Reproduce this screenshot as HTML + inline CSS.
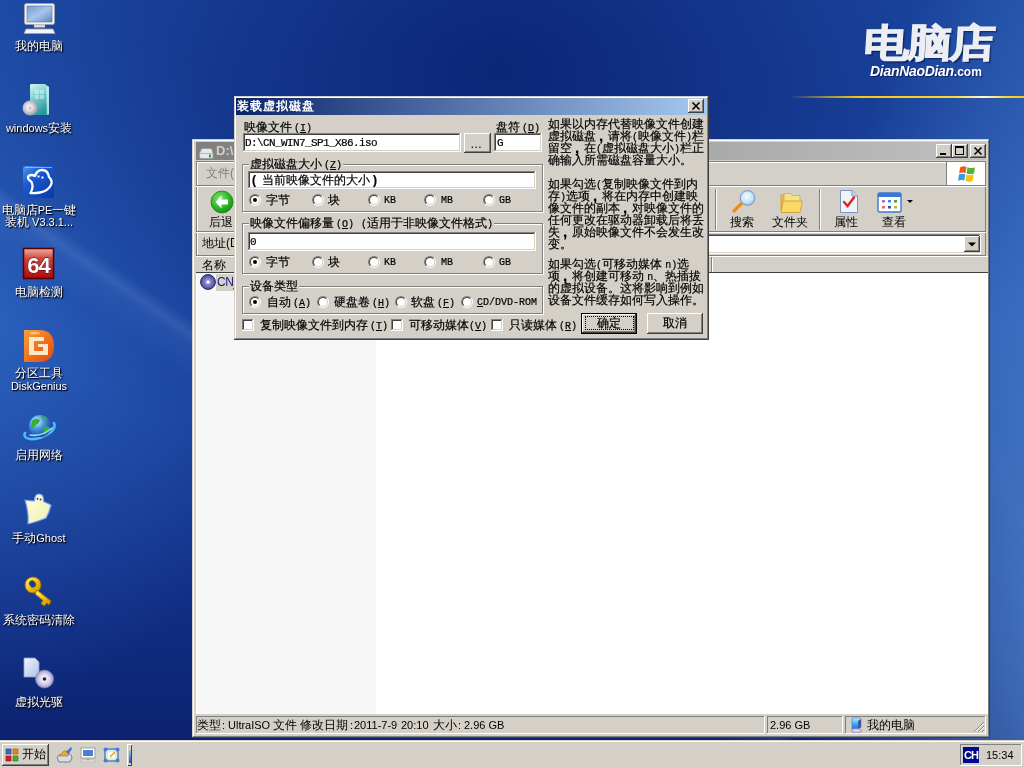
<!DOCTYPE html>
<html><head><meta charset="utf-8">
<style>
*{box-sizing:border-box}
html,body{margin:0;padding:0;width:1024px;height:768px;overflow:hidden;font-family:"Liberation Sans",sans-serif;font-size:12px;color:#000}
.a{position:absolute}
#desk{position:absolute;left:0;top:0;width:1024px;height:740px;overflow:hidden;
background:
 radial-gradient(ellipse 330px 760px at 1120px 600px, rgba(100,160,230,.8) 0%, rgba(100,160,230,0) 100%),
 linear-gradient(34.7deg, rgba(150,200,255,0) 0%, rgba(150,200,255,0) 34%, rgba(150,200,255,.07) 36.4%, rgba(170,215,255,.14) 37.1%, rgba(150,200,255,0) 38.2%, rgba(150,200,255,0) 100%),
 radial-gradient(ellipse 600px 430px at 500px 70px, rgba(8,30,110,.85) 0%, rgba(8,30,110,0) 100%),
 radial-gradient(ellipse 330px 380px at -40px 330px, rgba(55,115,210,.6) 0%, rgba(55,115,210,0) 100%),
 linear-gradient(180deg,#1f4faa 0%,#1b47a2 45%,#112f85 80%,#0c2270 100%);}
.raised{box-shadow:inset -1px -1px #404040, inset 1px 1px #d4d0c8, inset -2px -2px #808080, inset 2px 2px #fff;background:#d4d0c8}
.sunken{box-shadow:inset -1px -1px #fff, inset 1px 1px #808080, inset -2px -2px #d4d0c8, inset 2px 2px #404040;background:#fff}
.btn{box-shadow:inset -1px -1px #404040, inset 1px 1px #fff, inset -2px -2px #808080, inset 2px 2px #d4d0c8;background:#d4d0c8}
.thin-sunken{box-shadow:inset -1px -1px #fff, inset 1px 1px #808080}
.thin-raised{box-shadow:inset -1px -1px #808080, inset 1px 1px #fff}
.dlg{font-family:"Liberation Sans",sans-serif;font-size:12px;line-height:12px;white-space:nowrap}
.mono{font-family:"Liberation Mono",monospace}

.rb{position:absolute;width:12px;height:12px;border-radius:50%;border:1px solid;border-color:#808080 #fff #fff #808080}
.rb::before{content:"";position:absolute;left:0;top:0;width:10px;height:10px;border-radius:50%;border:1px solid;border-color:#404040 #d4d0c8 #d4d0c8 #404040;background:#fff;box-sizing:border-box}
.rb.on::after{content:"";position:absolute;left:3px;top:3px;width:4px;height:4px;border-radius:50%;background:#000}
.cb{position:absolute;width:12px;height:12px;background:#fff;box-shadow:inset -1px -1px #fff, inset 1px 1px #808080, inset -2px -2px #d4d0c8, inset 2px 2px #404040}
.grp{position:absolute;border:1px solid #808080;box-shadow:inset 1px 1px #fff, 1px 1px #fff}
.lbl{position:absolute;white-space:nowrap;line-height:12px;font-size:12px;-webkit-text-stroke:0.2px #000}
.glbl{position:absolute;white-space:nowrap;line-height:12px;font-size:12px;-webkit-text-stroke:0.2px #000;background:#d4d0c8;padding:0 1px}
.cm{display:inline-block;width:12px;height:12px;vertical-align:top;position:relative}
.cm::after{content:",";position:absolute;left:3px;top:0px;font-family:"Liberation Sans",sans-serif;font-weight:bold;font-size:15px;line-height:12px}
.m{font-family:"Liberation Mono",monospace;font-size:10px}
.u{text-decoration:underline}
.ico-lbl{position:absolute;color:#fff;text-shadow:1px 1px 1px #000, 1px 1px 2px rgba(0,0,0,.7);font-size:12px;line-height:12px;text-align:center;white-space:nowrap}
</style></head>
<body>
<div id="root" style="position:absolute;left:0;top:0;width:1024px;height:768px;will-change:transform">
<div id="desk"></div>

<!-- logo -->
<div class="a" style="left:790px;top:96px;width:234px;height:2px;background:linear-gradient(90deg,rgba(240,192,24,0) 0%,rgba(240,192,24,.6) 15%,#f4c818 30%,#f8d838 70%,#fff8e0 83%,#f8d838 92%,#f4c818 100%)"></div>
<div class="a" style="left:865px;top:20px;font-size:38px;line-height:46px;font-weight:700;color:#eceef2;transform:scaleX(1.2) skewX(-3deg);transform-origin:0 0;letter-spacing:-2px;-webkit-text-stroke:1.2px #eceef2;text-shadow:2px 2px 1px rgba(0,10,60,.55)">电脑店</div>
<div class="a" style="left:870px;top:63px;font-size:14px;line-height:17px;font-weight:bold;font-style:italic;color:#fff;white-space:nowrap;text-shadow:1px 1px 1px rgba(0,0,40,.6);letter-spacing:-0.3px">DianNaoDian<span style="font-weight:bold;font-style:normal;font-size:12px;letter-spacing:0">.com</span></div>

<!-- desktop icons -->
<svg class="a" style="left:23px;top:2px" width="33" height="33" viewBox="0 0 33 33">
 <defs><linearGradient id="scr" x1="0" y1="0" x2="1" y2="1"><stop offset="0" stop-color="#6f9bd0"/><stop offset=".5" stop-color="#a9c6ea"/><stop offset="1" stop-color="#5a86c0"/></linearGradient></defs>
 <rect x="1.5" y="1.5" width="30" height="21" rx="2" fill="#f2f2f2" stroke="#9aa0a8" stroke-width="1"/>
 <rect x="4" y="4" width="25" height="16" fill="url(#scr)" stroke="#5a78a0" stroke-width=".6"/>
 <rect x="11" y="22.5" width="11" height="3" fill="#d8d8d8"/>
 <path d="M3 27 H30 L32 31.5 H1 Z" fill="#f4f4f4" stroke="#a0a0a8" stroke-width=".8"/>
</svg>
<div class="ico-lbl" style="left:0;top:40px;width:78px">我的电脑</div>

<svg class="a" style="left:22px;top:83px" width="30" height="34" viewBox="0 0 30 34">
 <defs><linearGradient id="tb" x1="0" y1="0" x2="0.4" y2="1"><stop offset="0" stop-color="#d8f8f8"/><stop offset=".45" stop-color="#80d0d0"/><stop offset="1" stop-color="#2c9a9c"/></linearGradient>
 <radialGradient id="cd2" cx="45%" cy="45%" r="55%"><stop offset="0" stop-color="#fff"/><stop offset=".5" stop-color="#d8d4d8"/><stop offset="1" stop-color="#a09ca4"/></radialGradient></defs>
 <path d="M8 2 Q8 1 9.5 1 H23 L27 4 V31 Q27 32 26 32 H9.5 Q8 32 8 31 Z" fill="url(#tb)"/>
 <path d="M24 3 L27 4 V31 L25 32 Z" fill="#c8f4f4" opacity=".8"/>
 <path d="M13 7 h4 v4 h-4 z M18 7 h4 v4 h-4 z M13 12 h4 v4 h-4 z M18 12 h4 v4 h-4 z" fill="#e8ffff" opacity=".45"/>
 <circle cx="8" cy="25" r="7.5" fill="url(#cd2)"/>
 <circle cx="8" cy="25" r="1.5" fill="#c0c0c8"/>
</svg>
<div class="ico-lbl" style="left:0;top:122px;width:78px"><span style="font-size:11px">windows</span>安装</div>

<svg class="a" style="left:22px;top:165px" width="33" height="33" viewBox="0 0 33 33">
 <defs><linearGradient id="pe" x1="0" y1="0" x2="1" y2="1"><stop offset="0" stop-color="#4a9af0"/><stop offset=".35" stop-color="#1a5ad0"/><stop offset="1" stop-color="#0838a8"/></linearGradient></defs>
 <rect x="1" y="1" width="31" height="32" rx="3" fill="url(#pe)"/>
 <path d="M3 2.5 H30" stroke="#a8d0ff" stroke-width="1" opacity=".7"/>
 <path d="M8.5 28 Q12 22 9.5 17 Q4.5 13.5 6.5 11 Q9.5 9 13 11 Q15 5 20 5 Q26 5 27 12 Q31 16 29 20 Q26 26 18 27.5 Q12 28.5 8.5 28 Z" fill="none" stroke="#fff" stroke-width="2.3" stroke-linejoin="round"/>
 <rect x="15.5" y="10.5" width="2" height="2" fill="#fff"/><rect x="19.5" y="11.5" width="2" height="2" fill="#fff"/>
</svg>
<div class="ico-lbl" style="left:0;top:204px;width:78px">电脑店<span style="font-size:11px">PE</span>一键</div><div class="ico-lbl" style="left:0;top:216px;width:78px">装机<span style="font-size:11px"> V3.3.1...</span></div>

<svg class="a" style="left:22px;top:247px" width="33" height="33" viewBox="0 0 33 33">
 <defs><linearGradient id="r64" x1="0" y1="0" x2="0" y2="1"><stop offset="0" stop-color="#f0b0a8"/><stop offset=".35" stop-color="#d04038"/><stop offset="1" stop-color="#b00c08"/></linearGradient></defs>
 <rect x="1.5" y="1.5" width="30" height="30" fill="url(#r64)" stroke="#5a0000" stroke-width="1.6"/>
 <text x="16.5" y="26" text-anchor="middle" font-family="Liberation Sans" font-weight="bold" font-size="22" fill="#fff" stroke="#300" stroke-width=".8" paint-order="stroke" letter-spacing="-1">64</text>
</svg>
<div class="ico-lbl" style="left:0;top:286px;width:78px">电脑检测</div>

<svg class="a" style="left:23px;top:329px" width="32" height="34" viewBox="0 0 32 34">
 <defs><linearGradient id="dg" x1="0" y1="0" x2="1" y2="1"><stop offset="0" stop-color="#f8a040"/><stop offset=".6" stop-color="#ee6a18"/><stop offset="1" stop-color="#d84c10"/></linearGradient></defs>
 <path d="M1 1 H16 Q31 1 31 17 Q31 33 16 33 H1 Z" fill="url(#dg)"/>
 <path d="M6 8 H21 V12 H11 V22 H20 V18 H15 V15 H25 V26 H6 Z" fill="#fbe8c8"/>
 <ellipse cx="12" cy="4" rx="5" ry="1.5" fill="#ffd080" opacity=".7"/>
</svg>
<div class="ico-lbl" style="left:0;top:367px;width:78px">分区工具</div><div class="ico-lbl" style="left:0;top:380px;width:78px"><span style="font-size:11px">DiskGenius</span></div>

<svg class="a" style="left:22px;top:414px" width="34" height="28" viewBox="0 0 34 28">
 <defs><radialGradient id="gl2" cx="35%" cy="30%" r="70%"><stop offset="0" stop-color="#e8f8ff"/><stop offset=".45" stop-color="#4a9ae8"/><stop offset="1" stop-color="#1a48a0"/></radialGradient></defs>
 <path d="M3 19 Q1 24 8 25 Q18 26 29 18 Q34 13 32 9" fill="none" stroke="#46bdf4" stroke-width="2.6" stroke-linecap="round"/>
 <circle cx="18" cy="12" r="11" fill="url(#gl2)"/>
 <path d="M10 7 Q14 3 18 6 Q17 10 14 11 Q12 15 9 13 Z M21 13 Q25 11 28 14 Q26 19 22 21 Z M19 2 Q23 2 25 5 Q22 6 20 4 Z" fill="#38b038"/>
 <path d="M8 21 Q20 23 30 14" fill="none" stroke="#9adcfa" stroke-width="1.6" stroke-linecap="round"/>
</svg>
<div class="ico-lbl" style="left:0;top:449px;width:78px">启用网络</div>

<svg class="a" style="left:24px;top:493px" width="30" height="33" viewBox="0 0 30 33">
 <defs><linearGradient id="gh" x1="0" y1="0" x2="1" y2="1"><stop offset="0" stop-color="#ffffe0"/><stop offset="1" stop-color="#eef0b0"/></linearGradient></defs>
 <path d="M1 7 Q6 8 10.5 8 Q10.5 1 15 1 Q20 1 19.5 8.5 L27 12 Q25 20 22 25 Q15 28 4 31 Q5 20 1 7 Z" fill="url(#gh)" stroke="#7aa0f0" stroke-width="1.2" stroke-linejoin="round"/>
 <ellipse cx="13.5" cy="5.8" rx=".8" ry="1.1" fill="#2a2a7a"/><ellipse cx="16.5" cy="6.5" rx=".8" ry="1.1" fill="#2a2a7a"/>
</svg>
<div class="ico-lbl" style="left:0;top:532px;width:78px">手动<span style="font-size:11px">Ghost</span></div>

<svg class="a" style="left:24px;top:576px" width="30" height="31" viewBox="0 0 30 31">
 <defs><linearGradient id="key" x1="0" y1="0" x2="1" y2="1"><stop offset="0" stop-color="#fff4a0"/><stop offset=".45" stop-color="#f4c818"/><stop offset="1" stop-color="#c08800"/></linearGradient></defs>
 <circle cx="9" cy="9" r="8" fill="url(#key)" stroke="#9a7000" stroke-width="1"/>
 <ellipse cx="8.5" cy="8" rx="3" ry="3.6" fill="#1a3a9a" stroke="#8a6000" stroke-width=".6" transform="rotate(-35 8.5 8)"/>
 <path d="M13 14 L27 25 L25 29 L22.5 27 L20.5 30 L17 27.5 L19 24.5 L11 18 Z" fill="url(#key)" stroke="#9a7000" stroke-width="1"/>
</svg>
<div class="ico-lbl" style="left:0;top:614px;width:78px">系统密码清除</div>

<svg class="a" style="left:23px;top:657px" width="32" height="32" viewBox="0 0 32 32">
 <defs><linearGradient id="doc" x1="0" y1="0" x2="1" y2="1"><stop offset="0" stop-color="#f4f8ff"/><stop offset="1" stop-color="#a8c0e8"/></linearGradient>
 <radialGradient id="cd3" cx="50%" cy="50%" r="50%"><stop offset="0" stop-color="#fff"/><stop offset=".6" stop-color="#d8d0f0"/><stop offset="1" stop-color="#9a98c8"/></radialGradient></defs>
 <path d="M1 1 H12 L16 5 V20 H1 Z" fill="url(#doc)" stroke="#8aa0c8" stroke-width=".8"/>
 <circle cx="21.5" cy="22" r="9" fill="url(#cd3)" stroke="#8888b0" stroke-width=".7"/>
 <circle cx="21.5" cy="22" r="1.8" fill="#222"/>
</svg>
<div class="ico-lbl" style="left:0;top:696px;width:78px">虚拟光驱</div>



<!-- taskbar -->
<div class="a" style="left:0;top:740px;width:1024px;height:28px;background:#d4d0c8;box-shadow:inset 0 1px #d4d0c8, inset 0 2px #fff"></div>
<div class="a btn" style="left:2px;top:744px;width:47px;height:22px"></div>
<svg class="a" style="left:5px;top:748px" width="14" height="14" viewBox="0 0 14 14">
 <rect x="1" y="1" width="5" height="5" fill="#3c6cc8" stroke="#1c3c88" stroke-width=".6"/>
 <rect x="8" y="1" width="5" height="5" fill="#f08020" stroke="#b05010" stroke-width=".6"/>
 <rect x="1" y="8" width="5" height="5" fill="#d02020" stroke="#901010" stroke-width=".6"/>
 <rect x="8" y="8" width="5" height="5" fill="#48a838" stroke="#287818" stroke-width=".6"/>
</svg>
<div class="a" style="left:22px;top:748px;line-height:13px;font-size:12px">开始</div>
<svg class="a" style="left:56px;top:746px" width="17" height="17" viewBox="0 0 17 17">
 <path d="M1 11 Q3 8 8 8 H14 Q16 9 16 12 L14 16 H3 Z" fill="#d8dce4" stroke="#606878" stroke-width=".8"/>
 <path d="M3 10 L8 5 H14 L12 10 Z" fill="#f0a830" stroke="#a86a10" stroke-width=".6"/>
 <path d="M10 6 L15 1 L16 3 L12 8 Z" fill="#3a78d8"/>
</svg>
<svg class="a" style="left:80px;top:747px" width="16" height="16" viewBox="0 0 16 16">
 <rect x="1" y="1" width="14" height="10" fill="#fff" stroke="#909090" stroke-width=".8"/>
 <rect x="3" y="3" width="10" height="6" fill="#4a7ed0"/>
 <rect x="6" y="11" width="4" height="2" fill="#b0b0b0"/>
 <rect x="1" y="13" width="14" height="2" fill="#e8e8e8" stroke="#a0a0a0" stroke-width=".5"/>
</svg>
<svg class="a" style="left:103px;top:747px" width="17" height="16" viewBox="0 0 17 16">
 <rect x="2" y="2" width="13" height="12" fill="#d8ecd8" stroke="#4a7ad0" stroke-width="1.4"/>
 <circle cx="2.5" cy="2.5" r="2" fill="#4a7ad0"/><circle cx="14.5" cy="2.5" r="2" fill="#4a7ad0"/>
 <circle cx="2.5" cy="13.5" r="2" fill="#4a7ad0"/><circle cx="14.5" cy="13.5" r="2" fill="#4a7ad0"/>
 <rect x="5" y="5" width="7" height="6" fill="#fff"/>
 <path d="M7 10 L12 5" stroke="#e8a020" stroke-width="1.6"/>
</svg>
<div class="a" style="left:127px;top:744px;width:5px;height:22px;box-shadow:inset 1px 1px #fff, inset -1px -1px #404040"></div>
<div class="a" style="left:129px;top:750px;width:2px;height:13px;background:linear-gradient(180deg,#a0c0f0,#2050c0)"></div>
<!-- tray -->
<div class="a thin-sunken" style="left:960px;top:744px;width:62px;height:22px"></div>
<div class="a" style="left:963px;top:747px;width:16px;height:16px;background:#00088c"></div>
<div class="a" style="left:964px;top:749px;color:#fff;font-size:11px;line-height:12px;letter-spacing:-1px;font-weight:bold">CH</div>
<div class="a" style="left:986px;top:749px;font-size:11px;line-height:12px">15:34</div>

<!-- explorer window -->
<div class="a raised" style="left:192px;top:139px;width:798px;height:599px"></div>
<div class="a" style="left:196px;top:142px;width:790px;height:18px;background:linear-gradient(90deg,#808080,#c0c0c0)"></div>
<svg class="a" style="left:199px;top:148px" width="15" height="11" viewBox="0 0 15 11">
 <path d="M2 2 Q2 0.5 4 0.5 H11 Q13 0.5 13 2 L14 5 V9 Q14 10.5 12.5 10.5 H2 Q0.5 10.5 0.5 9 V5 Z" fill="#e8e8ec" stroke="#9a9aa2" stroke-width="0.8"/>
 <rect x="1" y="5" width="13" height="1" fill="#b8b8c0"/>
 <rect x="10" y="6.5" width="2" height="3" fill="#2aa02a"/>
</svg>
<div class="a" style="left:216px;top:144px;font-weight:bold;font-size:13px;color:#d4d0c8;line-height:14px">D:\</div>
<!-- title buttons -->
<div class="a btn" style="left:936px;top:144px;width:16px;height:14px"></div>
<div class="a" style="left:940px;top:153px;width:6px;height:2px;background:#000"></div>
<div class="a btn" style="left:952px;top:144px;width:16px;height:14px"></div>
<div class="a" style="left:955px;top:146px;width:9px;height:9px;border:1px solid #000;border-top-width:2px"></div>
<div class="a btn" style="left:970px;top:144px;width:16px;height:14px"></div>
<svg class="a" style="left:970px;top:144px" width="16" height="14"><path d="M4.5 3.5 L11.5 10.5 M11.5 3.5 L4.5 10.5" stroke="#000" stroke-width="1.6"/></svg>

<!-- menubar band -->
<div class="a" style="left:196px;top:161px;width:790px;height:1px;background:#808080"></div>
<div class="a" style="left:196px;top:162px;width:790px;height:1px;background:#fff"></div>
<div class="a" style="left:196px;top:161px;width:1px;height:95px;background:#808080"></div>
<div class="a" style="left:197px;top:162px;width:1px;height:93px;background:#fff"></div>
<div class="a" style="left:985px;top:161px;width:1px;height:95px;background:#808080"></div>
<div class="a" style="left:196px;top:185px;width:790px;height:1px;background:#808080"></div>
<div class="a" style="left:196px;top:186px;width:790px;height:1px;background:#fff"></div>
<div class="a" style="left:946px;top:162px;width:39px;height:23px;background:#fff;box-shadow:inset 1px 0 #808080"></div>
<svg class="a" style="left:957px;top:165px" width="20" height="18" viewBox="0 0 20 18">
 <path d="M3 2.5 Q6 0.5 9.5 2 L8.5 8.2 Q5.5 6.8 2.2 8.6 Z" fill="#f05a1e"/>
 <path d="M10.5 2.2 Q14 4 18 2.2 L17 8.6 Q13.5 10 9.6 8.5 Z" fill="#5bb22c"/>
 <path d="M2 9.6 Q5.2 7.9 8.3 9.3 L7.3 15.6 Q4.5 14.2 1 15.8 Z" fill="#2e9de6"/>
 <path d="M9.4 9.5 Q13.2 11 16.8 9.6 L15.8 15.8 Q12.5 17.5 8.4 15.8 Z" fill="#f8c214"/>
</svg>
<div class="a" style="left:206px;top:167px;color:#808080;line-height:13px">文件(</div>

<!-- toolbar band -->
<div class="a" style="left:196px;top:231px;width:790px;height:1px;background:#808080"></div>
<div class="a" style="left:196px;top:232px;width:790px;height:1px;background:#fff"></div>
<svg class="a" style="left:210px;top:190px" width="24" height="24" viewBox="0 0 24 24">
 <defs><radialGradient id="gb" cx="40%" cy="35%" r="70%"><stop offset="0" stop-color="#8ee87a"/><stop offset=".6" stop-color="#2fb52a"/><stop offset="1" stop-color="#168a16"/></radialGradient></defs>
 <circle cx="12" cy="12" r="11" fill="url(#gb)" stroke="#1c8a1c" stroke-width="0.8"/>
 <path d="M11.5 5.5 L5.5 12 L11.5 18.5 V14.5 H18 V9.5 H11.5 Z" fill="#fff"/>
</svg>
<div class="a" style="left:209px;top:216px;line-height:13px">后退</div>
<div class="a" style="left:715px;top:189px;width:2px;height:41px;box-shadow:inset 1px 0 #808080, inset -1px 0 #fff"></div>
<svg class="a" style="left:731px;top:189px" width="26" height="25" viewBox="0 0 26 25">
 <defs><radialGradient id="gl" cx="45%" cy="40%" r="60%"><stop offset="0" stop-color="#f4fcff"/><stop offset=".7" stop-color="#bfe4f6"/><stop offset="1" stop-color="#8ec2e4"/></radialGradient></defs>
 <path d="M3 22 L11 14" stroke="#e8901c" stroke-width="3.2" stroke-linecap="round"/>
 <circle cx="16.5" cy="9" r="7.3" fill="url(#gl)" stroke="#8aa0c8" stroke-width="1.2"/>
</svg>
<div class="a" style="left:730px;top:216px;line-height:13px">搜索</div>
<svg class="a" style="left:780px;top:192px" width="24" height="22" viewBox="0 0 24 22">
 <path d="M1 3 H8 L10 5 H19 V19 H1 Z" fill="#e9c14a" stroke="#c89a28" stroke-width="0.8"/>
 <path d="M4 1.5 H10 L12 3.5 H20 V17 H4 Z" fill="#f8e08c" stroke="#c89a28" stroke-width="0.6"/>
 <path d="M3 9 H22.5 L20 20.5 H1 Z" fill="#fad865" stroke="#c89a28" stroke-width="0.8"/>
</svg>
<div class="a" style="left:772px;top:216px;line-height:13px">文件夹</div>
<div class="a" style="left:819px;top:189px;width:2px;height:41px;box-shadow:inset 1px 0 #808080, inset -1px 0 #fff"></div>
<svg class="a" style="left:838px;top:189px" width="22" height="25" viewBox="0 0 22 25">
 <path d="M2.5 1.5 H14 L19.5 7 V23.5 H2.5 Z" fill="#eef4fc" stroke="#7f95c0" stroke-width="1"/>
 <path d="M14 1.5 V7 H19.5" fill="#c8d8f0" stroke="#7f95c0" stroke-width="1"/>
 <path d="M6 13 L9.5 17 L16 8.5" stroke="#e42020" stroke-width="2.4" fill="none" stroke-linecap="round"/>
</svg>
<div class="a" style="left:834px;top:216px;line-height:13px">属性</div>
<svg class="a" style="left:877px;top:192px" width="38" height="22" viewBox="0 0 38 22">
 <rect x="1" y="1" width="23" height="19" rx="1.5" fill="#fff" stroke="#3a78d4" stroke-width="1.4"/>
 <rect x="1" y="1" width="23" height="4" fill="#3a78d4"/>
 <rect x="5" y="8" width="3" height="2.5" fill="#a06adc"/><rect x="11" y="8" width="3" height="2.5" fill="#4a88e0"/><rect x="17" y="8" width="3" height="2.5" fill="#38a838"/>
 <rect x="5" y="14" width="3" height="2.5" fill="#e86a50"/><rect x="11" y="14" width="3" height="2.5" fill="#2a58b8"/><rect x="17" y="14" width="3" height="2.5" fill="#d8a830"/>
 <path d="M30 8 H36 L33 11 Z" fill="#000"/>
</svg>
<div class="a" style="left:882px;top:216px;line-height:13px">查看</div>

<!-- address band -->
<div class="a" style="left:196px;top:255px;width:790px;height:1px;background:#808080"></div>
<div class="a" style="left:202px;top:237px;line-height:13px">地址(D</div>
<div class="a sunken" style="left:240px;top:234px;width:741px;height:20px"></div>
<div class="a btn" style="left:964px;top:236px;width:16px;height:16px"></div>
<svg class="a" style="left:964px;top:236px" width="16" height="16"><path d="M4 6.5 H12 L8 10.5 Z" fill="#000"/></svg>

<!-- list view -->
<div class="a" style="left:196px;top:256px;width:792px;height:458px;background:#fff"></div>
<div class="a" style="left:197px;top:273px;width:179px;height:441px;background:#f7f7f7"></div>
<div class="a" style="left:196px;top:256px;width:792px;height:17px;background:#d4d0c8;box-shadow:inset 0 1px #fff, inset 0 -1px #404040"></div>
<div class="a" style="left:711px;top:257px;width:1px;height:15px;background:#808080"></div>
<div class="a" style="left:712px;top:258px;width:1px;height:14px;background:#fff"></div>
<div class="a" style="left:202px;top:259px;line-height:13px">名称</div>
<svg class="a" style="left:200px;top:274px" width="16" height="16" viewBox="0 0 16 16">
 <defs><radialGradient id="cd" cx="50%" cy="50%" r="50%"><stop offset="0" stop-color="#d8d8f4"/><stop offset=".35" stop-color="#8a8ad0"/><stop offset="1" stop-color="#4a4a9a"/></radialGradient></defs>
 <circle cx="8" cy="8" r="7.4" fill="url(#cd)" stroke="#22225a" stroke-width="1"/>
 <circle cx="8" cy="8" r="1.6" fill="#fff"/>
</svg>
<div class="a" style="left:216px;top:274px;width:20px;height:17px;background:#d4d0c8"></div>
<div class="a" style="left:217px;top:276px;line-height:13px;color:#1a1a70;letter-spacing:-0.5px">CN_</div>

<!-- status bar -->
<div class="a thin-sunken" style="left:196px;top:716px;width:569px;height:18px"></div>
<div class="a thin-sunken" style="left:767px;top:716px;width:76px;height:18px"></div>
<div class="a thin-sunken" style="left:845px;top:716px;width:141px;height:18px"></div>
<div class="a" style="left:197px;top:719px;line-height:12px;font-size:12px;color:#000">类型</div><div class="a" style="left:222px;top:719px;line-height:12px;font-size:11px;color:#000">:</div><div class="a" style="left:228px;top:719px;line-height:12px;font-size:11px;color:#000">UltraISO</div><div class="a" style="left:273px;top:719px;line-height:12px;font-size:12px;color:#000">文件</div><div class="a" style="left:300px;top:719px;line-height:12px;font-size:12px;color:#000">修改日期</div><div class="a" style="left:350px;top:719px;line-height:12px;font-size:11px;color:#000">:</div><div class="a" style="left:354px;top:719px;line-height:12px;font-size:11px;color:#000">2011-7-9</div><div class="a" style="left:401px;top:719px;line-height:12px;font-size:11px;color:#000">20:10</div><div class="a" style="left:433px;top:719px;line-height:12px;font-size:12px;color:#000">大小</div><div class="a" style="left:458px;top:719px;line-height:12px;font-size:11px;color:#000">:</div><div class="a" style="left:464px;top:719px;line-height:12px;font-size:11px;color:#000">2.96 GB</div>
<div class="a" style="left:770px;top:719px;line-height:12px;font-size:11px">2.96 GB</div>
<svg class="a" style="left:851px;top:717px" width="12" height="16" viewBox="0 0 12 16">
 <defs><linearGradient id="stc" x1="0" y1="0" x2="0" y2="1"><stop offset="0" stop-color="#b8f0ff"/><stop offset=".6" stop-color="#2aa8f0"/><stop offset="1" stop-color="#3a6ad8"/></linearGradient></defs>
 <path d="M1 2 Q1 1 2 1 H9 L10 2 V10 L7 12 H1 Z" fill="url(#stc)" stroke="#4a6aa8" stroke-width=".6"/>
 <path d="M10 2 V10 L7 12 V4 Z" fill="#3a58b0"/>
 <path d="M1 12 Q5 11 9 12 Q11 13 10 15 Q5 16.5 1 15 Z" fill="#d8d8ec" stroke="#7060b0" stroke-width=".6"/>
</svg>
<div class="a" style="left:867px;top:719px;line-height:12px">我的电脑</div>
<svg class="a" style="left:972px;top:720px" width="13" height="13"><path d="M12 2 L2 12 M12 6 L6 12 M12 10 L10 12" stroke="#808080" stroke-width="1"/><path d="M12 3 L3 12 M12 7 L7 12 M12 11 L11 12" stroke="#fff" stroke-width="1"/></svg>



<!-- dialog -->
<div class="a raised" style="left:234px;top:96px;width:475px;height:244px"></div>
<div class="a" style="left:236px;top:98px;width:471px;height:17px;background:linear-gradient(90deg,#0a246a,#a6caf0)"></div>
<div class="a" style="left:237px;top:99px;color:#fff;font-weight:bold;font-size:12px;line-height:14px;letter-spacing:1px">装载虚拟磁盘</div>
<div class="a btn" style="left:688px;top:99px;width:16px;height:14px"></div>
<svg class="a" style="left:688px;top:99px" width="16" height="14"><path d="M4.5 3.5 L11.5 10.5 M11.5 3.5 L4.5 10.5" stroke="#000" stroke-width="1.6"/></svg>

<div class="lbl" style="left:244px;top:121px">映像文件<span class="m" style="margin-left:2px">(<span class="u">I</span>)</span></div>
<div class="a sunken" style="left:243px;top:133px;width:218px;height:19px"></div>
<div class="lbl m" style="left:245px;top:137px;font-size:11px;letter-spacing:-0.6px">D:\CN_WIN7_SP1_X86.iso</div>
<div class="a btn" style="left:464px;top:133px;width:27px;height:20px"></div>
<div class="lbl" style="left:471px;top:139px;font-size:10px;letter-spacing:1px">...</div>
<div class="lbl" style="left:496px;top:121px">盘符<span class="m" style="margin-left:2px">(<span class="u">D</span>)</span></div>
<div class="a sunken" style="left:494px;top:133px;width:48px;height:19px"></div>
<div class="lbl m" style="left:497px;top:137px;font-size:11px">G</div>

<div class="grp" style="left:242px;top:164px;width:301px;height:48px"></div>
<div class="glbl" style="left:249px;top:158px">虚拟磁盘大小<span class="m" style="margin-left:2px">(<span class="u">Z</span>)</span></div>
<div class="a sunken" style="left:248px;top:171px;width:288px;height:18px"></div>
<div class="lbl" style="left:252px;top:174px"><span style="display:inline-block;width:10px;font-weight:bold">(</span>当前映像文件的大小<span style="font-weight:bold;margin-left:3px">)</span></div>
<div class="rb on" style="left:249px;top:194px"></div><div class="lbl" style="left:266px;top:194px">字节</div>
<div class="rb" style="left:312px;top:194px"></div><div class="lbl" style="left:328px;top:194px">块</div>
<div class="rb" style="left:368px;top:194px"></div><div class="lbl m" style="left:384px;top:195px">KB</div>
<div class="rb" style="left:424px;top:194px"></div><div class="lbl m" style="left:441px;top:195px">MB</div>
<div class="rb" style="left:483px;top:194px"></div><div class="lbl m" style="left:499px;top:195px">GB</div>

<div class="grp" style="left:242px;top:223px;width:301px;height:51px"></div>
<div class="glbl" style="left:249px;top:217px">映像文件偏移量<span class="m" style="margin-left:2px">(<span class="u">O</span>)</span><span class="m" style="margin-left:7px">(</span>适用于非映像文件格式<span class="m">)</span></div>
<div class="a sunken" style="left:248px;top:232px;width:288px;height:19px"></div>
<div class="lbl m" style="left:250px;top:236px;font-size:11px">0</div>
<div class="rb on" style="left:249px;top:256px"></div><div class="lbl" style="left:266px;top:256px">字节</div>
<div class="rb" style="left:312px;top:256px"></div><div class="lbl" style="left:328px;top:256px">块</div>
<div class="rb" style="left:368px;top:256px"></div><div class="lbl m" style="left:384px;top:257px">KB</div>
<div class="rb" style="left:424px;top:256px"></div><div class="lbl m" style="left:441px;top:257px">MB</div>
<div class="rb" style="left:483px;top:256px"></div><div class="lbl m" style="left:499px;top:257px">GB</div>

<div class="grp" style="left:242px;top:286px;width:301px;height:28px"></div>
<div class="glbl" style="left:249px;top:280px">设备类型</div>
<div class="rb on" style="left:249px;top:296px"></div><div class="lbl" style="left:267px;top:296px">自动<span class="m" style="margin-left:2px">(<span class="u">A</span>)</span></div>
<div class="rb" style="left:317px;top:296px"></div><div class="lbl" style="left:334px;top:296px">硬盘卷<span class="m" style="margin-left:2px">(<span class="u">H</span>)</span></div>
<div class="rb" style="left:395px;top:296px"></div><div class="lbl" style="left:411px;top:296px">软盘<span class="m" style="margin-left:2px">(<span class="u">F</span>)</span></div>
<div class="rb" style="left:461px;top:296px"></div><div class="lbl m" style="left:477px;top:297px"><span class="u">C</span>D/DVD-ROM</div>

<div class="cb" style="left:242px;top:319px"></div><div class="lbl" style="left:260px;top:319px">复制映像文件到内存<span class="m" style="margin-left:2px">(<span class="u">T</span>)</span></div>
<div class="cb" style="left:391px;top:319px"></div><div class="lbl" style="left:409px;top:319px">可移动媒体<span class="m">(<span class="u">V</span>)</span></div>
<div class="cb" style="left:491px;top:319px"></div><div class="lbl" style="left:509px;top:319px">只读媒体<span class="m" style="margin-left:2px">(<span class="u">R</span>)</span></div>

<div class="a" style="left:581px;top:313px;width:56px;height:21px;border:1px solid #000;box-shadow:inset -1px -1px #404040, inset 1px 1px #fff, inset -2px -2px #808080, inset 2px 2px #d4d0c8;background:#d4d0c8"></div>
<div class="a" style="left:585px;top:316px;width:49px;height:14px;border:1px dotted #000"></div>
<div class="lbl" style="left:597px;top:317px">确定</div>
<div class="a btn" style="left:647px;top:313px;width:56px;height:21px"></div>
<div class="lbl" style="left:663px;top:317px">取消</div>

<div class="lbl" style="left:548px;top:118px">如果以内存代替映像文件创建</div>
<div class="lbl" style="left:548px;top:130px">虚拟磁盘<span class="cm"></span>请将<span class="m">(</span>映像文件<span class="m">)</span>栏</div>
<div class="lbl" style="left:548px;top:142px">留空<span class="cm"></span>在<span class="m">(</span>虚拟磁盘大小<span class="m">)</span>栏正</div>
<div class="lbl" style="left:548px;top:154px">确输入所需磁盘容量大小。</div>
<div class="lbl" style="left:548px;top:178px">如果勾选<span class="m">(</span>复制映像文件到内</div>
<div class="lbl" style="left:548px;top:190px">存<span class="m">)</span>选项<span class="cm"></span>将在内存中创建映</div>
<div class="lbl" style="left:548px;top:202px">像文件的副本<span class="cm"></span>对映像文件的</div>
<div class="lbl" style="left:548px;top:214px">任何更改在驱动器卸载后将丢</div>
<div class="lbl" style="left:548px;top:226px">失<span class="cm"></span>原始映像文件不会发生改</div>
<div class="lbl" style="left:548px;top:238px">变。</div>
<div class="lbl" style="left:548px;top:258px">如果勾选<span class="m">(</span>可移动媒体 <span class="m">n)</span>选</div>
<div class="lbl" style="left:548px;top:270px">项<span class="cm"></span>将创建可移动 <span class="m">n</span>、热插拔</div>
<div class="lbl" style="left:548px;top:282px">的虚拟设备。这将影响到例如</div>
<div class="lbl" style="left:548px;top:294px">设备文件缓存如何写入操作。</div>
</div>
</body></html>
